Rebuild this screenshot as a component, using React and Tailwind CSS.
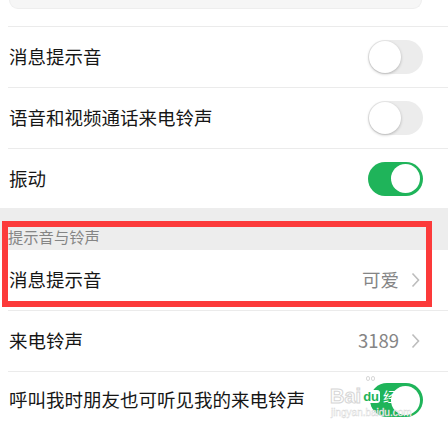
import { useState } from "react";

const Toggle = ({ on }) => {
  if (on) {
    return (
      <div className="w-[55px] h-[34px] rounded-full bg-[#1fb45a] flex items-center justify-end pr-[3px]">
        <div className="w-[29px] h-[29px] rounded-full bg-white" />
      </div>
    );
  }
  return (
    <div className="w-[55px] h-[34px] rounded-full bg-[#ececec] flex items-center pl-[1px]">
      <div className="w-[32px] h-[32px] rounded-full bg-white shadow-[0_1px_3px_rgba(0,0,0,0.25)]" />
    </div>
  );
};

const Chevron = () => (
  <svg width="9" height="16" viewBox="0 0 9 16" className="ml-[12px]">
    <polyline points="1.5,1.5 7.5,8 1.5,14.5" fill="none" stroke="#bdbdbd" strokeWidth="1.6" />
  </svg>
);

const Row = ({ label, children, last, h = "h-[61px]" }) => (
  <div className="pl-[8px]">
    <div className={`${h} flex items-center justify-between pr-[25px] ${last ? "" : "border-b border-[#ebebeb]"}`}>
      <span className="pl-[1px] text-[18.5px] text-[#161616]">{label}</span>
      {children}
    </div>
  </div>
);

const App = () => {
  const [vibrate] = useState(true);

  return (
    <div
      className="relative w-[448px] h-[431px] overflow-hidden bg-white"
      style={{ fontFamily: '"Noto Sans CJK SC", "Noto Sans", sans-serif' }}
    >
      {/* top leftover */}
      <div className="pl-[8px]">
        <div className="h-[27px] border-b border-[#ebebeb]">
          <div className="ml-[1px] w-[413px] h-[9px] bg-[#f6f6f6] rounded-b-[10px] border-b border-x border-[#eeeeee]" />
        </div>
      </div>

      <Row label="消息提示音">
        <Toggle on={false} />
      </Row>
      <Row label="语音和视频通话来电铃声">
        <Toggle on={false} />
      </Row>
      <Row label="振动" last h="h-[59px]">
        <Toggle on={vibrate} />
      </Row>

      <div className="h-[42px] bg-[#ededed] pt-[18px] pl-[8px]">
        <span className="block leading-[20px] text-[15.3px] text-[#858585]">提示音与铃声</span>
      </div>

      <div className="pl-[8px]">
        <div className="h-[61px] flex items-center justify-between pr-[28px] border-b border-[#ebebeb]">
          <span className="pl-[1px] text-[18.5px] text-[#161616]">消息提示音</span>
          <div className="flex items-center">
            <span className="text-[18.5px] text-[#858585]">可爱</span>
            <Chevron />
          </div>
        </div>
      </div>

      <div className="pl-[8px]">
        <div className="h-[61px] flex items-center justify-between pr-[28px] border-b border-[#ebebeb]">
          <span className="pl-[1px] text-[18.5px] text-[#161616]">来电铃声</span>
          <div className="flex items-center">
            <span className="text-[18.5px] text-[#858585]">3189</span>
            <Chevron />
          </div>
        </div>
      </div>

      <div className="pl-[8px]">
        <div className="h-[56px] flex items-center justify-between pr-[25px]">
          <span className="pl-[1px] text-[18.5px] text-[#161616]">呼叫我时朋友也可听见我的来电铃声</span>
          <div className="w-[53px] h-[34px] rounded-full bg-[#1fb45a] flex items-center justify-end pr-[3px]">
            <div className="w-[29px] h-[29px] rounded-full bg-white" />
          </div>
        </div>
      </div>

      {/* red annotation box */}
      <div className="absolute left-[2px] top-[221px] w-[430px] h-[86px] border-[6px] border-[#fc3a3a]" />

      {/* watermark */}
      <div className="absolute left-[330px] top-[376px] w-[100px] h-[50px] pointer-events-none">
        <div className="absolute left-[36px] top-[0px] flex gap-[1px]">
          <span className="w-[4px] h-[5px] rounded-full border border-[#d8d8d8]" />
          <span className="w-[4px] h-[5px] rounded-full border border-[#d8d8d8]" />
        </div>
        <div className="absolute left-0 top-[10px] flex items-center leading-none" style={{ fontFamily: '"Liberation Sans", sans-serif' }}>
          <span className="text-[20px] font-bold text-white [-webkit-text-stroke:1px_#d6d6d6]">Bai</span>
          <span className="ml-[1px] px-[1px] bg-white text-[#1fb45a] text-[13px] font-bold rounded-[3px]">du</span>
          <span className="ml-[3px] text-[14px] text-white" style={{ fontFamily: '"Noto Sans CJK SC", sans-serif' }}>经验</span>
        </div>
        <span className="absolute left-[1px] top-[32px] text-[10px] text-white [-webkit-text-stroke:0.4px_#d6d6d6] leading-none" style={{ fontFamily: '"Liberation Sans", sans-serif' }}>
          jingyan.baidu.com
        </span>
      </div>
    </div>
  );
};

export default App;
